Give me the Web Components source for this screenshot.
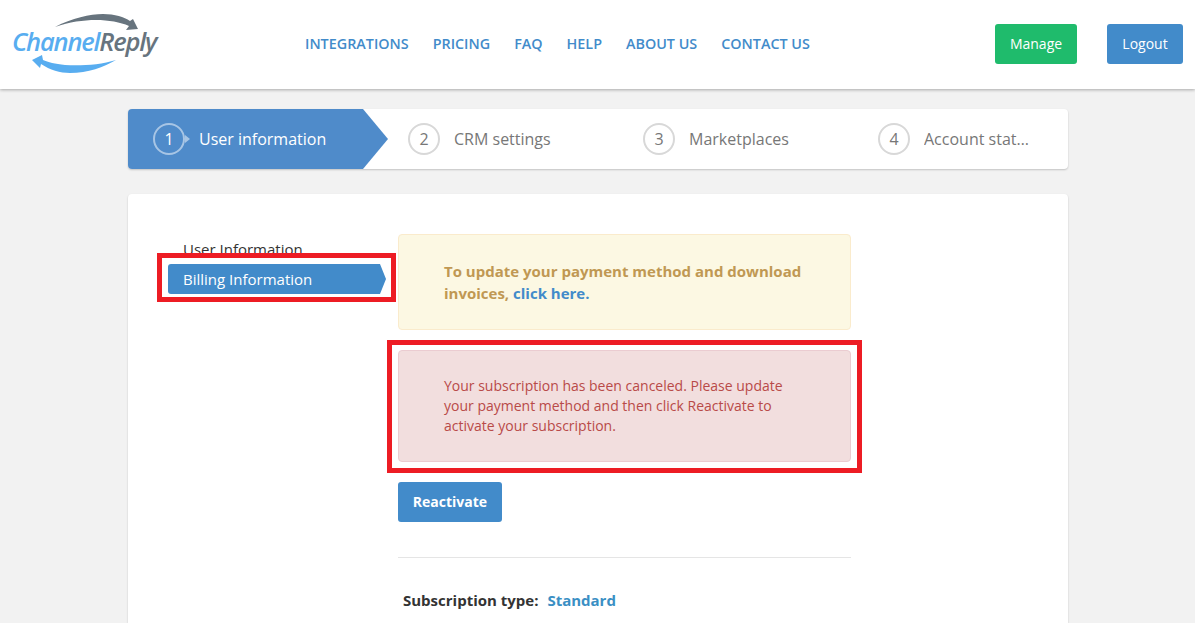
<!DOCTYPE html>
<html lang="en">
<head>
    <meta charset="UTF-8">
    <title>ChannelReply</title>
    <style>
        html, body {
            margin: 0;
            height: 623px;
            overflow: hidden;
            background: #f2f2f2;
            font-family: "Open Sans", sans-serif;
            color: #333;
        }
    </style>
</head>
<body>
    <app-header></app-header>
    <main-page></main-page>
    <script>
        class AppHeader extends HTMLElement {
            constructor() {
                super();
                this.attachShadow({ mode: 'open' });
                const links = ['Integrations', 'Pricing', 'FAQ', 'Help', 'About us', 'Contact us'];
                this.shadowRoot.innerHTML = `
                    <style>
                        :host {
                            display: flex;
                            align-items: center;
                            height: 89px;
                            background: #fff;
                            box-shadow: 0 1px 3px rgba(0,0,0,.3);
                            position: relative;
                        }
                        .logo {
                            position: relative;
                            width: 145px;
                            height: 65px;
                            margin: 0 0 0 13px;
                            flex: none;
                        }
                        .logo svg { position: absolute; left: 0; top: 0; }
                        .logo span {
                            position: absolute;
                            left: -1px;
                            top: 11px;
                            font: italic 600 25.5px/36px "Open Sans", sans-serif;
                            letter-spacing: -1.2px;
                            white-space: nowrap;
                            color: #58adf0;
                        }
                        .logo b { font-weight: 600; color: #67747e; }
                        nav {
                            display: flex;
                            gap: 24px;
                            margin-left: 147px;
                            margin-top: -3px;
                        }
                        nav a {
                            font-size: 14.35px;
                            font-weight: 600;
                            color: #428bca;
                            text-transform: uppercase;
                            text-decoration: none;
                        }
                        .actions {
                            display: flex;
                            gap: 30px;
                            margin-left: auto;
                            margin-right: 12px;
                            margin-top: -1px;
                        }
                        .btn {
                            height: 40px;
                            line-height: 40px;
                            text-align: center;
                            border-radius: 3px;
                            color: #fff;
                            font-size: 14px;
                        }
                        .green { background: #1fbb6c; width: 82px; }
                        .blue { background: #428bca; width: 76px; }
                    </style>
                    <div class="logo">
                        <svg width="145" height="65" viewBox="13 12 145 65">
                            <path d="M55 27 C72 18 90 14 103 14 C115 14 124 17 130 21 L133 19 L138 29 L126 30 L129 26 C112 19 85 17 55 27 Z" fill="#67747e"/>
                            <path d="M116 60 C100 65 80 66 65 65 C55 64 48 62 43 60 L42 55 L32 60 L40 68 L41 64 C50 70 60 73 70 73 C88 73 104 67 116 60 Z" fill="#58adf0"/>
                        </svg>
                        <span>Channel<b>Reply</b></span>
                    </div>
                    <nav>${links.map(l => `<a href="#">${l}</a>`).join('')}</nav>
                    <div class="actions">
                        <div class="btn green">Manage</div>
                        <div class="btn blue">Logout</div>
                    </div>
                `;
            }
        }
        customElements.define('app-header', AppHeader);

        class WizardStep extends HTMLElement {
            constructor() {
                super();
                this.attachShadow({ mode: 'open' });
                this.shadowRoot.innerHTML = `
                    <style>
                        :host {
                            display: flex;
                            align-items: center;
                            gap: 14px;
                            width: 235px;
                            box-sizing: border-box;
                            padding-left: 45px;
                            height: 60px;
                            position: relative;
                            font-size: 16px;
                            color: #777;
                        }
                        .num {
                            width: 32px;
                            height: 32px;
                            box-sizing: border-box;
                            flex: none;
                            border: 2px solid #d8d8d8;
                            border-radius: 50%;
                            text-align: center;
                            line-height: 29px;
                            font-size: 16px;
                        }
                        .label {
                            max-width: 105px;
                            overflow: hidden;
                            white-space: nowrap;
                            text-overflow: ellipsis;
                        }
                        :host([active]) .label { max-width: none; }
                        :host([active]) {
                            color: #fff;
                            background: #4f8bca;
                            border-radius: 4px 0 0 4px;
                            padding-left: 25px;
                        }
                        :host([active]) .num {
                            border-color: rgba(255,255,255,.5);
                            position: relative;
                        }
                        :host([active]) .num::after {
                            content: "";
                            position: absolute;
                            right: -7px;
                            top: 10px;
                            border-left: 5px solid rgba(255,255,255,.5);
                            border-top: 4px solid transparent;
                            border-bottom: 4px solid transparent;
                        }
                        :host([active])::after {
                            content: "";
                            position: absolute;
                            left: 100%;
                            top: 0;
                            border-left: 25px solid #4f8bca;
                            border-top: 30px solid transparent;
                            border-bottom: 30px solid transparent;
                        }
                    </style>
                    <div class="num">${this.getAttribute('num')}</div>
                    <div class="label"><slot></slot></div>
                `;
            }
        }
        customElements.define('wizard-step', WizardStep);

        class WizardBar extends HTMLElement {
            constructor() {
                super();
                this.attachShadow({ mode: 'open' });
                this.shadowRoot.innerHTML = `
                    <style>
                        :host {
                            display: flex;
                            height: 60px;
                            background: #fff;
                            border-radius: 4px;
                            box-shadow: 0 1px 2px rgba(0,0,0,.2);
                            margin-bottom: 25px;
                        }
                    </style>
                    <slot></slot>
                `;
            }
        }
        customElements.define('wizard-bar', WizardBar);

        class SideMenu extends HTMLElement {
            constructor() {
                super();
                this.attachShadow({ mode: 'open' });
                this.shadowRoot.innerHTML = `
                    <style>
                        :host {
                            display: block;
                            width: 212px;
                            flex: none;
                            margin-top: 1px;
                            font-size: 15px;
                        }
                        div {
                            height: 30px;
                            line-height: 29px;
                            padding-left: 15px;
                            color: #333;
                        }
                        .on {
                            position: relative;
                            margin-top: -1px;
                            line-height: 30px;
                            color: #fff;
                            background: #428bca;
                            border-radius: 3px 0 0 3px;
                        }
                        .on::after {
                            content: "";
                            position: absolute;
                            left: 100%;
                            top: 0;
                            border-left: 6px solid #428bca;
                            border-top: 15px solid transparent;
                            border-bottom: 15px solid transparent;
                        }
                    </style>
                    <div>User Information</div>
                    <div class="on">Billing Information</div>
                `;
            }
        }
        customElements.define('side-menu', SideMenu);

        class AlertBox extends HTMLElement {
            constructor() {
                super();
                this.attachShadow({ mode: 'open' });
                this.shadowRoot.innerHTML = `
                    <style>
                        :host {
                            display: block;
                            box-sizing: border-box;
                            padding: 25px 45px;
                            border: 1px solid;
                            border-radius: 4px;
                            margin-bottom: 20px;
                            font-size: 14px;
                            line-height: 20px;
                        }
                        :host([type=warning]) {
                            background: #fcf8e3;
                            border-color: #faebcc;
                            color: #c09853;
                            font-size: 15px;
                            font-weight: 700;
                            line-height: 22px;
                        }
                        :host([type=danger]) {
                            background: #f2dede;
                            border-color: #ebccd1;
                            color: #b94a48;
                        }
                    </style>
                    <slot></slot>
                `;
            }
        }
        customElements.define('alert-box', AlertBox);

        class MainPage extends HTMLElement {
            constructor() {
                super();
                this.attachShadow({ mode: 'open' });
                this.shadowRoot.innerHTML = `
                    <style>
                        :host {
                            display: block;
                            width: 940px;
                            margin: 20px auto 0 128px;
                            position: relative;
                        }
                        .card {
                            display: flex;
                            background: #fff;
                            border-radius: 4px 4px 0 0;
                            box-shadow: 0 1px 2px rgba(0,0,0,.2);
                            padding: 40px 40px 0;
                            height: 429px;
                            box-sizing: border-box;
                        }
                        .content { width: 453px; margin-left: 18px; }
                        a { color: #428bca; text-decoration: none; }
                        .reactivate {
                            display: inline-block;
                            height: 40px;
                            line-height: 40px;
                            width: 104px;
                            text-align: center;
                            border-radius: 3px;
                            background: #428bca;
                            color: #fff;
                            font-size: 14px;
                            font-weight: 700;
                        }
                        hr {
                            border: 0;
                            border-top: 1px solid #e5e5e5;
                            margin: 35px 0 32px;
                        }
                        .sub {
                            padding-left: 5px;
                            font-size: 15px;
                            font-weight: 700;
                            color: #333;
                            line-height: 20px;
                        }
                        .sub span { color: #3a8fc4; margin-left: 5px; }
                        .mark {
                            position: absolute;
                            box-sizing: border-box;
                            border: 5px solid #ed1c24;
                            pointer-events: none;
                        }
                    </style>
                    <wizard-bar>
                        <wizard-step num="1" active>User information</wizard-step>
                        <wizard-step num="2">CRM settings</wizard-step>
                        <wizard-step num="3">Marketplaces</wizard-step>
                        <wizard-step num="4">Account status</wizard-step>
                    </wizard-bar>
                    <div class="card">
                        <side-menu></side-menu>
                        <div class="content">
                            <alert-box type="warning">To update your payment method and download<br>invoices, <a href="#">click here.</a></alert-box>
                            <alert-box type="danger">Your subscription has been canceled. Please update your payment method and then click Reactivate to activate your subscription.</alert-box>
                            <div class="reactivate">Reactivate</div>
                            <hr>
                            <div class="sub">Subscription type: <span>Standard</span></div>
                        </div>
                    </div>
                    <div class="mark" style="left:29px;top:144px;width:239px;height:49px"></div>
                    <div class="mark" style="left:259px;top:231px;width:475px;height:133px"></div>
                `;
            }
        }
        customElements.define('main-page', MainPage);
    </script>
</body>
</html>
